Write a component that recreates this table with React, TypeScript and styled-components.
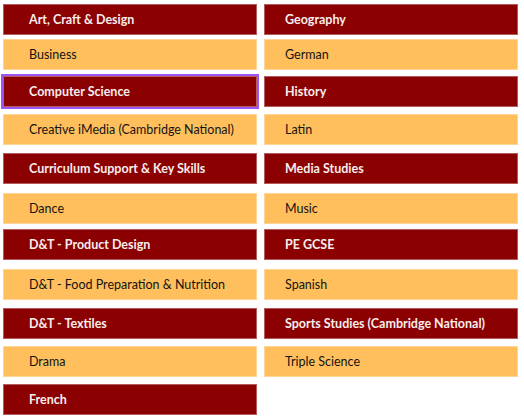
import { createGlobalStyle } from "styled-components";
import styled from "styled-components";

const leftSubjects = [
  "Art, Craft & Design",
  "Business",
  "Computer Science",
  "Creative iMedia (Cambridge National)",
  "Curriculum Support & Key Skills",
  "Dance",
  "D&T - Product Design",
  "D&T - Food Preparation & Nutrition",
  "D&T - Textiles",
  "Drama",
  "French",
];

const rightSubjects = [
  "Geography",
  "German",
  "History",
  "Latin",
  "Media Studies",
  "Music",
  "PE GCSE",
  "Spanish",
  "Sports Studies (Cambridge National)",
  "Triple Science",
];

const FOCUSED = "Computer Science";

export default function App() {
  return (
    <>
      <GlobalStyle />
      <SubjectGrid>
        {leftSubjects.map((name, i) => (
          <Subject
            key={name}
            href="#"
            $dark={i % 2 === 0}
            $indent={26}
            $focused={name === FOCUSED}
          >
            {name}
          </Subject>
        ))}
        {rightSubjects.map((name, i) => (
          <Subject key={name} href="#" $dark={i % 2 === 0} $indent={21}>
            {name}
          </Subject>
        ))}
      </SubjectGrid>
    </>
  );
}

const GlobalStyle = createGlobalStyle`
  html, body {
    margin: 0;
    padding: 0;
    background: #ffffff;
  }

  body {
    font-family: Lato, "Open Sans", sans-serif;
  }
`;

// row pitches as measured from the page (the tiles don't sit on an even rhythm)
const SubjectGrid = styled.div`
  display: grid;
  grid-auto-flow: column;
  grid-template-columns: repeat(2, 254px);
  grid-template-rows: 35px 37px 38px 39px 40px 36px 40px 39px 38px 38px 31px;
  column-gap: 7px;
  padding: 4px 0 0 3px;
`;

const Subject = styled.a<{ $dark: boolean; $indent: number; $focused?: boolean }>`
  display: flex;
  align-items: center;
  align-self: start;
  box-sizing: border-box;
  height: 31px;
  padding-left: ${(p) => p.$indent - 1}px;
  text-decoration: none;
  font-size: 12.5px;
  font-weight: ${(p) => (p.$dark ? 700 : 400)};
  color: ${(p) => (p.$dark ? "#f7eded" : "#141414")};
  background: ${(p) => (p.$dark ? "#8b0000" : "#ffbf5c")};
  border: 1px solid ${(p) => (p.$dark ? "#b45c5c" : "#ffd597")};
  outline: ${(p) => (p.$focused ? "2px solid #9d55f5" : "none")};
  white-space: nowrap;
`;
